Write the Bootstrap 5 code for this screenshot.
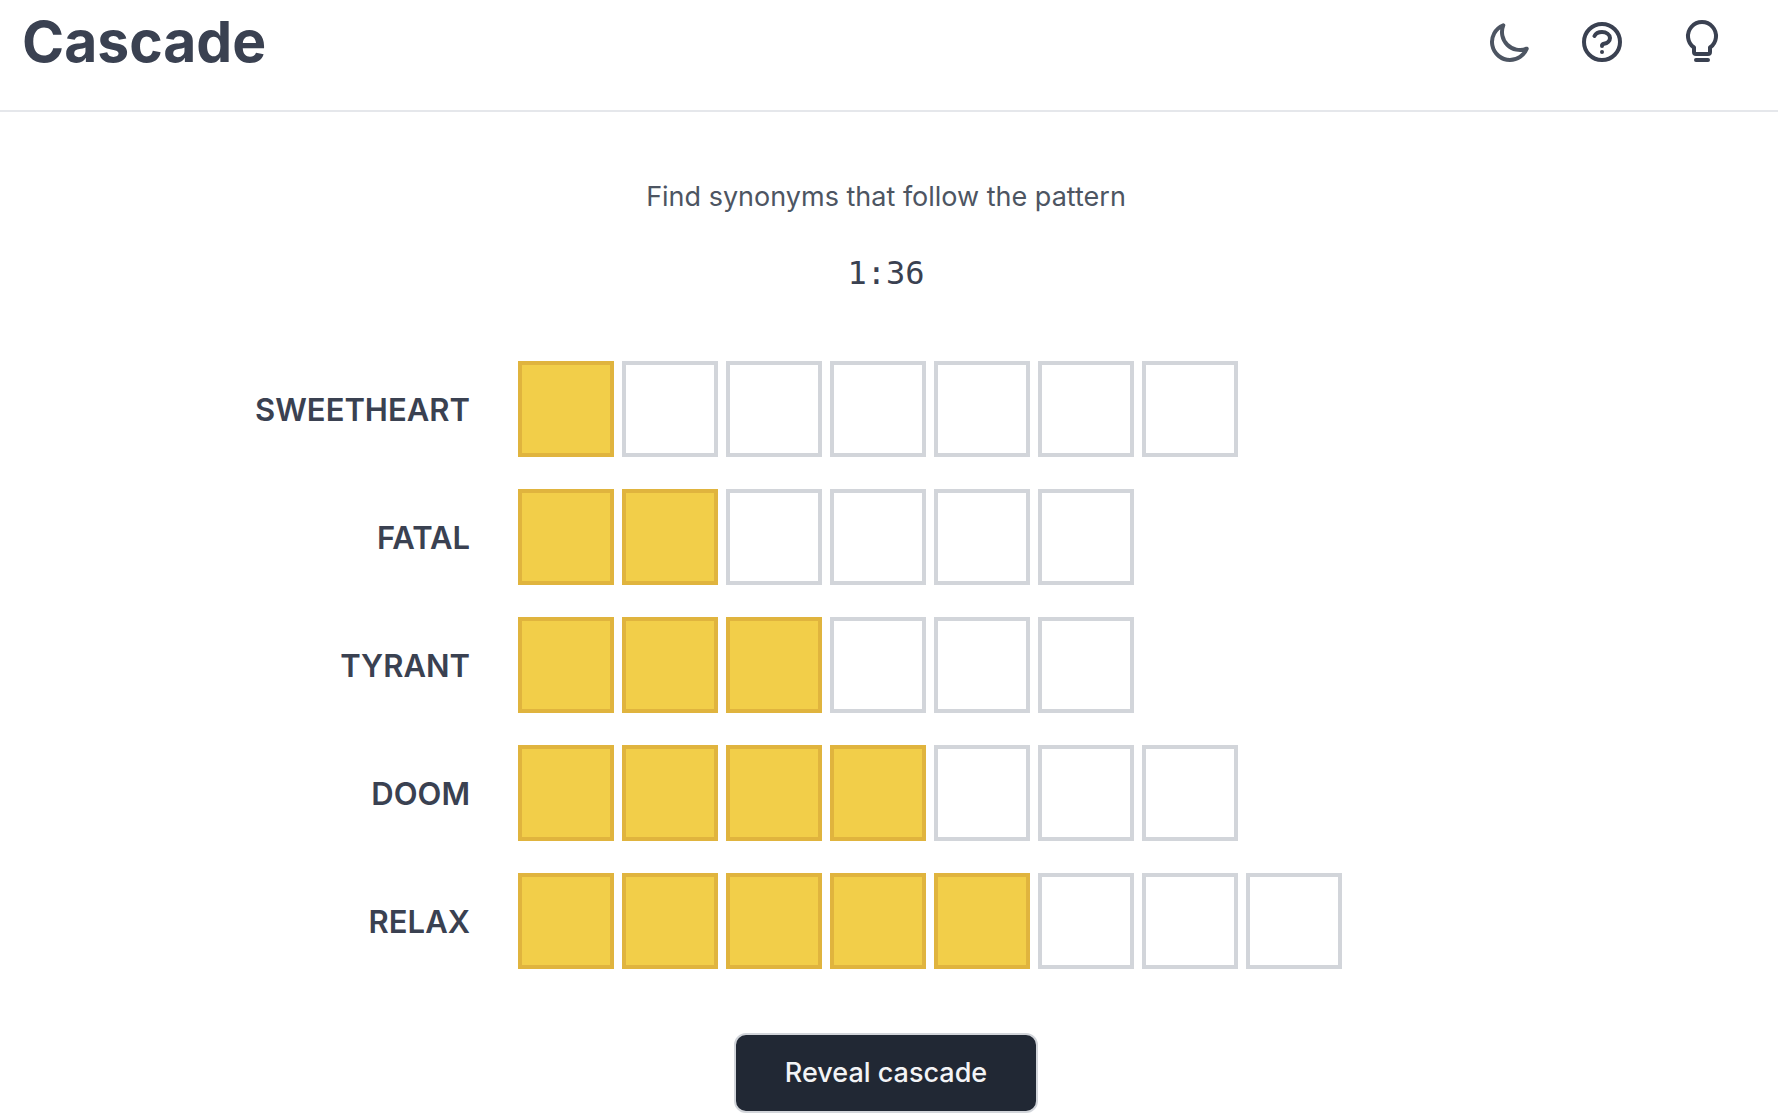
<!DOCTYPE html>
<html lang="en">
<head>
<meta charset="utf-8">
<meta name="viewport" content="width=device-width, initial-scale=1">
<title>Cascade</title>
<link href="https://cdn.jsdelivr.net/npm/bootstrap@5.3.0/dist/css/bootstrap.min.css" rel="stylesheet">
<style>
  body { font-family: Inter, "Liberation Sans", sans-serif; color: #3a4151; background: #fff; }
  .topbar { height: 112px; padding: 0 52px 26px 22px; border-bottom: 2px solid #e5e7eb; }
  .brand-title { font-size: 57px; line-height: 64px; font-weight: 700; }
  .icon-btn { width: 48px; height: 48px; padding: 0; border: 0; background: none; color: #3a4151; display: block; }
  .icon-btn svg { display: block; fill: none; stroke: currentColor; stroke-linecap: round; stroke-linejoin: round; }
  .theme-btn { color: #4d5562; margin-right: 44px; }
  .help-btn { margin-right: 52px; }
  .game { padding: 65px 6px 0 0; }
  .prompt { font-size: 27px; line-height: 40px; color: #4d5562; margin-bottom: 36px; }
  .timer { font-family: "DejaVu Sans Mono", monospace; font-size: 32px; line-height: 40px; margin-bottom: 68px; }
  .board { max-width: 1344px; margin: 0 auto 64px; gap: 32px; }
  .clue { width: 256px; margin-right: 48px; padding-top: 2px; font-size: 31px; line-height: 40px; font-weight: 600; text-align: right; }
  .tile { width: 96px; height: 96px; border: 4px solid #d2d5da; background: #fff; }
  .tile.lit { background: #f2ce49; border-color: #e0b43e; }
  .reveal-btn { min-width: 304px; height: 80px; padding: 0 48px; font-size: 27px; font-weight: 500; color: #f3f4f6; background: #212834; border: 2px solid #d2d5da; border-radius: 12px; }
  .reveal-btn:hover { color: #fff; background: #3a4151; border-color: #d2d5da; }
</style>
</head>
<body>
<header class="topbar d-flex align-items-center justify-content-between">
  <h1 class="brand-title m-0">Cascade</h1>
  <div class="d-flex align-items-center">
    <button type="button" class="icon-btn theme-btn" aria-label="Dark mode">
      <svg width="48" height="48" viewBox="0 0 24 24" stroke-width="2"><path d="M20.354 15.354A9 9 0 018.646 3.646 9.003 9.003 0 0012 21a9.003 9.003 0 008.354-5.646z"/></svg>
    </button>
    <button type="button" class="icon-btn help-btn" aria-label="Help">
      <svg width="48" height="48" viewBox="0 0 24 24" stroke-width="2"><path d="M8.228 9c.549-1.165 2.03-2 3.772-2 2.21 0 4 1.343 4 3 0 1.4-1.278 2.575-3.006 2.907-.542.104-.994.54-.994 1.093m0 3h.01M21 12a9 9 0 11-18 0 9 9 0 0118 0z"/></svg>
    </button>
    <button type="button" class="icon-btn" aria-label="Hint">
      <svg width="48" height="48" viewBox="0 0 48 48" stroke-width="4"><path d="M18 36q-2 0-2-2V29.500A14 14 0 1 1 32 29.500V34q0 2-2 2zM18 42H30"/></svg>
    </button>
  </div>
</header>
<main class="game text-center">
  <p class="prompt">Find synonyms that follow the pattern</p>
  <div class="timer">1:36</div>
  <div class="board d-flex flex-column">
    <div class="d-flex align-items-center">
      <div class="clue">SWEETHEART</div>
      <div class="d-flex gap-2"><div class="tile lit"></div><div class="tile"></div><div class="tile"></div><div class="tile"></div><div class="tile"></div><div class="tile"></div><div class="tile"></div></div>
    </div>
    <div class="d-flex align-items-center">
      <div class="clue">FATAL</div>
      <div class="d-flex gap-2"><div class="tile lit"></div><div class="tile lit"></div><div class="tile"></div><div class="tile"></div><div class="tile"></div><div class="tile"></div></div>
    </div>
    <div class="d-flex align-items-center">
      <div class="clue">TYRANT</div>
      <div class="d-flex gap-2"><div class="tile lit"></div><div class="tile lit"></div><div class="tile lit"></div><div class="tile"></div><div class="tile"></div><div class="tile"></div></div>
    </div>
    <div class="d-flex align-items-center">
      <div class="clue">DOOM</div>
      <div class="d-flex gap-2"><div class="tile lit"></div><div class="tile lit"></div><div class="tile lit"></div><div class="tile lit"></div><div class="tile"></div><div class="tile"></div><div class="tile"></div></div>
    </div>
    <div class="d-flex align-items-center">
      <div class="clue">RELAX</div>
      <div class="d-flex gap-2"><div class="tile lit"></div><div class="tile lit"></div><div class="tile lit"></div><div class="tile lit"></div><div class="tile lit"></div><div class="tile"></div><div class="tile"></div><div class="tile"></div></div>
    </div>
  </div>
  <button type="button" class="btn reveal-btn">Reveal cascade</button>
</main>
<script src="https://cdn.jsdelivr.net/npm/bootstrap@5.3.0/dist/js/bootstrap.bundle.min.js"></script>
</body>
</html>
